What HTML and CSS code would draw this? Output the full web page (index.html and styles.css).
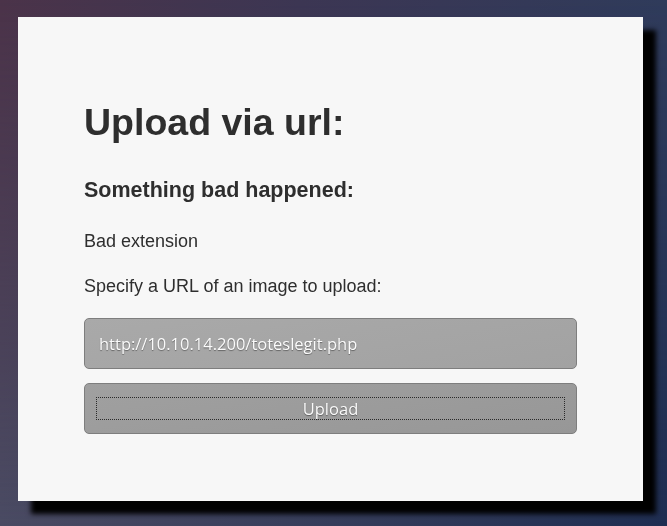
FILE: index.html
```html
<!DOCTYPE html>
<html>
<head>
<meta charset="utf-8">
<link rel="stylesheet" href="styles.css">
</head>
<body>
<main class="card">
  <h1 class="title">Upload via url:</h1>
  <h2 class="subtitle">Something bad happened:</h2>
  <p class="text error">Bad extension</p>
  <p class="text label">Specify a URL of an image to upload:</p>
  <form class="form">
    <input class="field" type="text" value="http://10.10.14.200/toteslegit.php">
    <button class="btn" type="button"><span class="btn-focus">Upload</span></button>
  </form>
</main>
</body>
</html>
```
FILE: styles.css
```css
html, body {
  margin: 0;
  padding: 0;
  height: 100%;
}
body {
  background: linear-gradient(to right, #4a4b63 0%, #363d5b 50%, #1f2e52 100%);
  font-family: "Liberation Sans", Arial, sans-serif;
  color: #2e2e2e;
  padding: 17px 24px 0 18px;
  box-sizing: border-box;
  overflow: hidden;
}
body::before {
  content: "";
  position: fixed;
  inset: 0;
  z-index: -1;
  background: linear-gradient(to right, #4b3349 0%, #3c3653 45%, #2f3b5b 100%);
  -webkit-mask-image: linear-gradient(to bottom, #000 0%, rgba(0,0,0,0.6) 45%, transparent 100%);
  mask-image: linear-gradient(to bottom, #000 0%, rgba(0,0,0,0.6) 45%, transparent 100%);
}
.card {
  width: 625px;
  height: 484px;
  box-sizing: border-box;
  background: #f7f7f7;
  box-shadow: 13px 13px 5px #000;
  padding: 84px 66px 0 66px;
  display: flex;
  flex-direction: column;
}
.title {
  margin: 0;
  font-size: 37.5px;
  font-weight: bold;
  line-height: 43px;
}
.subtitle {
  margin: 34px 0 0 0;
  font-size: 21.5px;
  font-weight: bold;
  line-height: 24px;
}
.text {
  margin: 0;
  font-size: 18px;
  line-height: 21px;
}
.error {
  margin-top: 29px;
}
.label {
  margin-top: 24px;
}
.form {
  margin: 21px 0 0 0;
  display: flex;
  flex-direction: column;
  gap: 14px;
}
.field, .btn {
  width: 493px;
  height: 51px;
  box-sizing: border-box;
  border: 1px solid #7e7e7e;
  border-radius: 5px;
  font-family: "Open Sans", "Noto Sans", sans-serif;
  font-size: 16.5px;
  color: #fbfbfb;
  text-shadow: 0 1px 1px rgba(0,0,0,0.4);
  margin: 0;
}
.field {
  background: linear-gradient(170deg, #a9a9a9, #a2a2a2);
  padding: 0 14px;
  outline: none;
}
.btn {
  background: linear-gradient(170deg, #a0a0a0, #979797);
  padding: 13px 11px;
  display: flex;
}
.btn-focus {
  flex: 1;
  border: 1px dotted #2a2a2a;
  display: flex;
  align-items: center;
  justify-content: center;
  height: 23px;
  box-sizing: border-box;
}
```
